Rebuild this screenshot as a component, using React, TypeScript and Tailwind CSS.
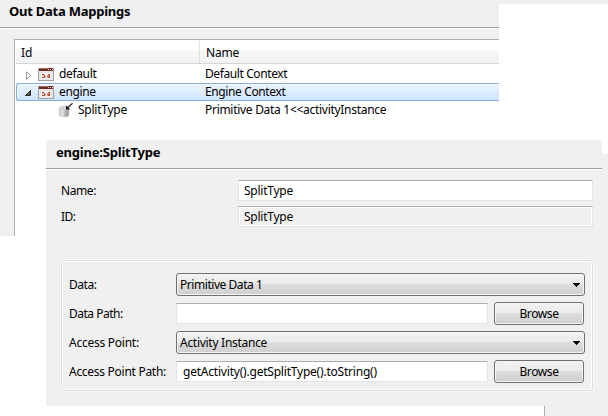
import type { ReactNode } from "react";

function WindowIcon() {
  return (
    <svg className="block h-[13px] w-4" viewBox="0 0 16 13" shapeRendering="crispEdges">
      <rect width="16" height="13" fill="#a0a1a4" />
      <rect x="1" y="0" width="14" height="3" fill="#6b2b20" />
      <rect x="1" y="0" width="9" height="1" fill="#a0705f" />
      <rect x="10" y="1" width="1" height="1" fill="#e8d8d4" />
      <rect x="12" y="1" width="1" height="1" fill="#e8d8d4" />
      <rect x="14" y="1" width="1" height="1" fill="#e8d8d4" />
      <rect x="1" y="3" width="14" height="9" fill="#e6e8ea" />
      <rect x="3" y="5" width="10" height="6" fill="#f6f1ef" />
      <path d="M4 6h2v1h-2zM6 7h1v1h-1zM4 9h2v-1h1v2h-3zM10 6h2v1h-2zM9 8h2v-1h1v3h-2v-1h-1z" fill="#bd5638" />
      <path d="M4 7h2v1h-2zM7 8h1v2h-1zM9 7h2v1h-2zM9 9h1v1h-1z" fill="#e0b3a0" />
    </svg>
  );
}

function DataIcon() {
  return (
    <svg className="block h-[15px] w-[15px]" viewBox="0 0 15 15">
      <defs>
        <linearGradient id="cylinder">
          <stop offset="0" stopColor="#c2c2c2" />
          <stop offset=".35" stopColor="#e6e6e6" />
          <stop offset=".65" stopColor="#b0b0b0" />
          <stop offset="1" stopColor="#9c9c9c" />
        </linearGradient>
      </defs>
      <path d="M.8 5v7c0 3 10.2 3 10.2 0v-7z" fill="url(#cylinder)" />
      <ellipse cx="5.9" cy="5" rx="5.1" ry="2.1" fill="#d2d2d2" />
      <path d="M14.5 .3L9.5 4.9" stroke="#111" strokeWidth="1.2" />
      <path d="M8 2.3v4.2h4.2z" fill="#111" />
    </svg>
  );
}

function Input({ children, className, readOnly }: { children?: ReactNode; className: string; readOnly?: boolean }) {
  return (
    <div
      className={`h-[21px] rounded-[1px] border border-[#e2e3ea] border-t-[#abadb3] ${
        readOnly ? "bg-[#f0f0f0] shadow-[inset_0_0_0_1px_#fff]" : "bg-white"
      } ${className}`}
    >
      {children}
    </div>
  );
}

const face =
  "rounded-[3px] border border-[#707070] bg-[linear-gradient(#f2f2f2_0%,#ebebeb_48%,#dddddd_50%,#cfcfcf_100%)] shadow-[inset_0_0_0_1px_#f5f5f5]";

function Combo({ children }: { children: ReactNode }) {
  return (
    <div className={`flex h-[23px] w-[409px] justify-between pr-1 pl-[3px] ${face}`}>
      <span className="pt-[3px]">{children}</span>
      <svg className="mt-[9px] block h-1 w-[7px]" viewBox="0 0 7 4" shapeRendering="crispEdges">
        <path d="M0 0h7v1h-1v1h-1v1h-1v1h-1v-1h-1v-1h-1v-1h-1z" fill="#000" />
      </svg>
    </div>
  );
}

function Browse() {
  return (
    <button className={`flex h-[23px] w-[90px] items-start justify-center pt-[3px] ${face}`}>
      <span className="tracking-[-0.4px]">Browse</span>
    </button>
  );
}

function MappingsPanel() {
  return (
    <section className="col-start-1 row-start-1 flex h-[236px] w-[499px] flex-col bg-[#f0f0f0]">
      <h1 className="h-[27px] pt-[3px] pl-[9px] text-[13px] font-bold tracking-[-0.24px]">Out Data Mappings</h1>
      <div className="h-3 border-t border-[#a0a0a0] shadow-[inset_0_1px_0_#fff]" />
      <div className="ml-[14px] flex-1 border-t border-l border-[#abadb3] bg-white pl-px">
        <div className="flex h-6 border-b border-[#d5d5d5] bg-[linear-gradient(#fff_0%,#fff_42%,#f7f8fa_44%,#f1f2f4_100%)] pt-px">
          <div className="w-[184px] border-r border-[#e0e1e4] pt-1 pl-[5px]">Id</div>
          <div className="pt-1 pl-[6px] tracking-[-0.2px]">Name</div>
        </div>
        <div className="flex h-[19px] pt-[1px] pl-[10px]">
          <svg className="mt-[6px] block h-[9px] w-[6px]" viewBox="0 0 6 9">
            <path d="M.5.8v7.4L4.7 4.5z" fill="#fff" stroke="#989898" />
          </svg>
          <div className="mt-[3px] ml-[6px]"><WindowIcon /></div>
          <span className="ml-[5px] w-[146px] pt-px tracking-[-0.35px]">default</span>
          <span className="pt-px tracking-[-0.4px]">Default Context</span>
        </div>
        <div className="flex h-[18px] rounded-l-[3px] border border-r-0 border-[#84acdd] bg-linear-to-b from-[#ebf4fe] to-[#cfe4fe] pl-2 shadow-[inset_1px_1px_0_#f3f9ff]">
          <svg className="mt-[6px] block h-[6px] w-[6px]" viewBox="0 0 6 6">
            <path d="M5.5.5v5h-5z" fill="#595959" stroke="#262626" />
          </svg>
          <div className="mt-[2px] ml-[7px]"><WindowIcon /></div>
          <span className="ml-[5px] w-[146px] tracking-[-0.35px]">engine</span>
          <span className="tracking-[-0.38px]">Engine Context</span>
        </div>
        <div className="flex h-[18px] pl-[42px]">
          <div className="mt-[2px]"><DataIcon /></div>
          <span className="ml-[5px] w-[127px] pt-px tracking-[-0.25px]">SplitType</span>
          <span className="pt-px tracking-[-0.29px]">Primitive Data 1&lt;&lt;activityInstance</span>
        </div>
      </div>
    </section>
  );
}

function DetailPanel() {
  return (
    <section className="col-start-1 row-start-1 mt-[140px] ml-[46px] flex h-[266px] w-[556px] flex-col bg-[#f0f0f0]">
      <h2 className="h-7 pt-1 pl-[10px] text-[13px] font-bold tracking-[-0.2px]">engine:SplitType</h2>
      <div className="h-3 border-t border-[#a0a0a0] shadow-[inset_0_1px_0_#fff]" />
      <div className="flex h-[26px] pl-[15px]">
        <span className="w-[177px] pt-[3px] tracking-[-0.4px]">Name:</span>
        <Input className="w-[355px] pt-[2px] pl-[5px] tracking-[-0.25px]">SplitType</Input>
      </div>
      <div className="flex h-[26px] pl-[15px]">
        <span className="w-[177px] pt-[3px] tracking-[-0.5px]">ID:</span>
        <Input readOnly className="w-[355px] pt-[2px] pl-[5px] tracking-[-0.25px]">SplitType</Input>
      </div>
      <div className="mt-7 ml-[15px] h-[131px] w-[532px] rounded-[3px] border border-[#d5dfe5] pt-3 pl-[7px] shadow-[inset_0_0_0_1px_#fff,0_0_0_1px_#f6f8f9]">
        <div className="flex h-[29px]">
          <span className="w-[107px] pt-[4px] tracking-[-0.45px]">Data:</span>
          <Combo><span className="tracking-[-0.45px]">Primitive Data 1</span></Combo>
        </div>
        <div className="flex h-[29px]">
          <span className="w-[107px] pt-[4px] tracking-[-0.5px]">Data Path:</span>
          <Input className="mt-px mr-[6px] w-[312px]" />
          <Browse />
        </div>
        <div className="flex h-[29px]">
          <span className="w-[107px] pt-[4px] tracking-[-0.25px]">Access Point:</span>
          <Combo><span className="tracking-[-0.28px]">Activity Instance</span></Combo>
        </div>
        <div className="flex h-[29px]">
          <span className="w-[107px] pt-[4px] tracking-[-0.28px]">Access Point Path:</span>
          <Input className="mt-px mr-[6px] w-[312px] pt-[2px] pl-[6px] tracking-[-0.21px]">
            getActivity().getSplitType().toString()
          </Input>
          <Browse />
        </div>
      </div>
    </section>
  );
}

export default function App() {
  return (
    <main className="grid h-[416px] w-[608px] overflow-hidden bg-white font-['Noto_Sans',sans-serif] text-[12px] leading-4 whitespace-nowrap text-black">
      <div className="col-start-1 row-start-1 h-1 w-[608px] bg-[#f0f0f0]" />
      <div className="col-start-1 row-start-1 mt-[154px] ml-[602px] h-[262px] w-[6px] bg-[#f0f0f0]" />
      <div className="col-start-1 row-start-1 mt-[406px] ml-[544px] h-[10px] w-[64px] border-l border-[#abadb3] bg-[#f0f0f0]" />
      <MappingsPanel />
      <DetailPanel />
    </main>
  );
}
